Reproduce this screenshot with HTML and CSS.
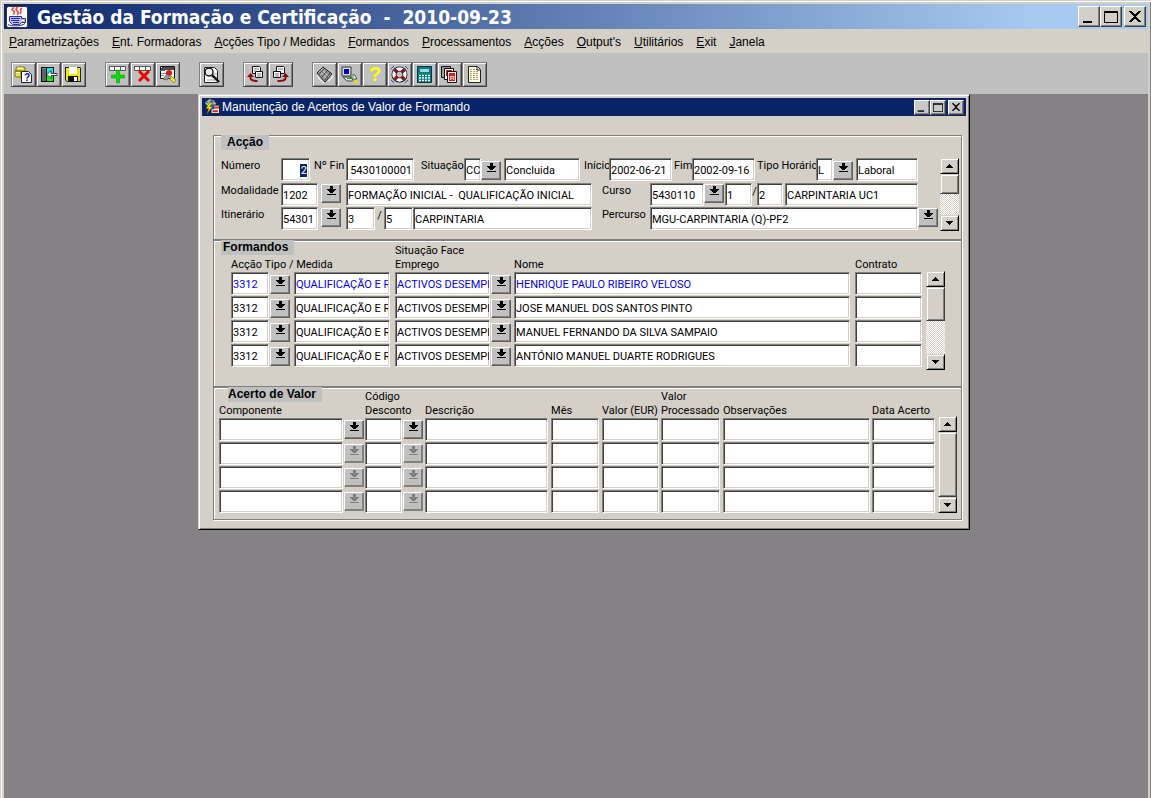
FILE: index.html
```html
<!DOCTYPE html>
<html lang="pt">
<head>
<meta charset="utf-8">
<title>Gestão da Formação e Certificação</title>
<link rel="stylesheet" href="styles.css">
</head>
<body>
<svg class="defs" aria-hidden="true">
  <symbol id="lov" viewBox="0 0 9 9"><path d="M3 0h3v3h3v1h-1v1h-1v1h-1v1h-3v-1h-1v-1h-1v-1h-1v-1h3zM0 8h9v1h-9z"/></symbol>
  <symbol id="up" viewBox="0 0 7 4"><path d="M3 0h1v1h1v1h1v1h1v1h-7v-1h1v-1h1v-1h1z"/></symbol>
  <symbol id="down" viewBox="0 0 7 4"><path d="M0 0h7v1h-1v1h-1v1h-1v1h-1v-1h-1v-1h-1v-1h-1z"/></symbol>
  <symbol id="min" viewBox="0 0 14 12"><path d="M1 10h9v2h-9z"/></symbol>
  <symbol id="max" viewBox="0 0 14 12"><path d="M0 0h14v12h-14zM1 2v9h12v-9z" fill-rule="evenodd"/></symbol>
  <symbol id="close" viewBox="0 0 12 11"><path d="M0 0h3v1h1v1h1v1h2v-1h1v-1h1v-1h3v1h-1v1h-1v1h-1v1h-1v1h-1v1h1v1h1v1h1v1h1v1h1v1h-3v-1h-1v-1h-1v-1h-2v1h-1v1h-1v1h-3v-1h1v-1h1v-1h1v-1h1v-1h1v-1h-1v-1h-1v-1h-1v-1h-1v-1h-1z"/></symbol>
</svg>
<div class="app">
  <header class="titlebar">
    <svg class="logo" viewBox="0 0 22 22" aria-hidden="true"><rect x=".5" y=".5" width="21" height="21" rx="2" fill="#fff" stroke="#334"/><path d="M8 1.500c-6 3 4 3-1 7M12 1c-6 4 4 4-1 8M16 2c-4 3 1 3-2 6" fill="none" stroke="#f04848" stroke-width="1.600"/><path d="M3.500 10.500h12v2h4v4h-4l-2 2h-7l-3-3z" fill="#b8bce8" stroke="#303090"/><path d="M15 14.500h3" stroke="#fff"/><path d="M5 12.500h9M5 14.500h8M7 16.500h6M2 18.500c3 2 13 2 17-1" fill="none" stroke="#282898"/></svg>
    <h1>Gestão da Formação e Certificação&nbsp; -&nbsp; 2010-09-23</h1>
    <div class="winbtns">
      <button aria-label="Minimizar"><svg class="g14"><use href="#min"/></svg></button>
      <button aria-label="Maximizar"><svg class="g14"><use href="#max"/></svg></button>
      <button aria-label="Fechar" class="x"><svg class="g12"><use href="#close"/></svg></button>
    </div>
  </header>
  <nav class="menu" aria-label="Menu">
    <button><u>P</u>arametrizações</button><button><u>E</u>nt. Formadoras</button><button><u>A</u>cções Tipo / Medidas</button><button><u>F</u>ormandos</button><button><u>P</u>rocessamentos</button><button><u>A</u>cções</button><button><u>O</u>utput's</button><button><u>U</u>tilitários</button><button><u>E</u>xit</button><button><u>J</u>anela</button>
  </nav>
  <div class="toolbar" role="toolbar" aria-label="Ferramentas">
    <div class="tools">
      <button aria-label="Consulta"><svg viewBox="0 0 17 17"><path d="M2 1h7l1 1v3h-9v-3zM0 5h6v6h-5l-1-1z" fill="#e8e040" stroke="#806800"/><path d="M2 2h6M1 6.500h4" stroke="#fff"/><path d="M6.500 5.500h7l3 3v8h-10z" fill="#fff" stroke="#222"/><text x="9" y="15" class="qs">?</text></svg></button>
      <button aria-label="Sair"><svg viewBox="0 0 17 17"><path d="M1 1h13v15h-13z" fill="#111"/><path d="M2 2h4v13h-4z" fill="#808080"/><path d="M3 3v12M5 3v12" stroke="#444"/><path d="M7 2h6v7h-6z" fill="#00f0f0"/><path d="M7 9h6v6h-6z" fill="#00ff00"/><path d="M7 8.500l4-4v3h6v2h-6v3z" fill="#fff" stroke="#222" stroke-width=".8"/></svg></button>
      <button aria-label="Gravar"><svg viewBox="0 0 17 17"><path d="M0 1h15l1 1v14h-14l-2-2z" fill="#222"/><path d="M1 2h14v13h-13l-1-1z" fill="#f0e800"/><path d="M4 1h8v7h-8z" fill="#fff"/><path d="M3 10h10v6h-10z" fill="#111"/><path d="M9 11h3v4h-3z" fill="#fff"/></svg></button>
    </div>
    <div class="tools">
      <button aria-label="Inserir"><svg viewBox="0 0 17 17"><path d="M.5.500h16v4h-16zM5.500 1v3M11.500 1v3" fill="#fff" stroke="#555"/><path d="M7.500 4h3v5h5v3h-5v5h-3v-5h-5v-3h5z" fill="#00e000" stroke="#00a000" stroke-width=".6"/></svg></button>
      <button aria-label="Eliminar"><svg viewBox="0 0 17 17"><path d="M.5.500h16v4h-16zM5.500 1v3M11.500 1v3" fill="#fff" stroke="#555"/><path d="M5 5l10 10M15 5l-10 10" stroke="#f00000" stroke-width="3"/></svg></button>
      <button aria-label="Limpar"><svg viewBox="0 0 17 17"><path d="M1.500.500h14v12h-14z" fill="#fff" stroke="#111"/><path d="M1 3h14M3 1h12" stroke="#111" stroke-width="1.500"/><path d="M2 7.500h5M2 9.500h3" stroke="#888"/><path d="M1 4.500h5" stroke="#008080"/><circle cx="10" cy="7" r="3" fill="#f01010"/><path d="M4 13l4-5 3 2-3 4z" fill="#999" stroke="#333" stroke-width=".5"/><path d="M12 10l5 4-2 3-4-4z" fill="#ffe800" stroke="#886"/></svg></button>
    </div>
    <div class="tools">
      <button aria-label="Procurar"><svg viewBox="0 0 17 17"><path d="M1.500 1.500h10l3 3v12h-13z" fill="#fff" stroke="#222"/><path d="M9 8h5M8 11h6M4 14h9" stroke="#999"/><circle cx="6" cy="6" r="4" fill="#eee" stroke="#111" stroke-width="1.400"/><path d="M9 9l7 7" stroke="#111" stroke-width="2.400"/></svg></button>
    </div>
    <div class="tools">
      <button aria-label="Anterior"><svg viewBox="0 0 17 17"><path d="M5.500.500h7l1 1v6h-8z" fill="#fff" stroke="#111"/><path d="M8.500 5.500h7v6h-7z" fill="#fff" stroke="#111"/><path d="M7 3h5M7 5h2M10 8h4M10 10h4" stroke="#777"/><path d="M3.500 10v2c0 3 4 3 7 3" fill="none" stroke="#900808" stroke-width="2"/><path d="M0 11l3.500-4 3.500 4z" fill="#900808"/></svg></button>
      <button aria-label="Seguinte"><svg viewBox="0 0 17 17"><path d="M4.500.500h7l1 1v6h-8z" fill="#fff" stroke="#111"/><path d="M1.500 5.500h7v6h-7z" fill="#fff" stroke="#111"/><path d="M6 3h5M3 8h4M3 10h4" stroke="#777"/><path d="M13.500 10v2c0 3-4 3-8 3" fill="none" stroke="#900808" stroke-width="2"/><path d="M10 11l3.500-4 3.500 4z" fill="#900808"/></svg></button>
    </div>
    <div class="tools">
      <button aria-label="Imprimir"><svg viewBox="0 0 17 17"><path d="M1 7l6-6 9 7-7 8z" fill="#999" stroke="#222"/><path d="M5 3l8 8M3 5l8 8" stroke="#ddd" stroke-width=".8"/><path d="M8 3l-5 5M11 5l-5 6M14 7l-5 7" stroke="#222" stroke-width=".8"/><path d="M1 9l3 5 4 3M12 15l4-3v-3" stroke="#fff" fill="none"/></svg></button>
      <button aria-label="Sistema"><svg viewBox="0 0 17 17"><path d="M1 1h9v9h-9z" fill="#ddd" stroke="#333"/><path d="M3 3h5v5h-5z" fill="#0000d0"/><path d="M2 11h7l4 4h-7z" fill="#ddd" stroke="#444"/><path d="M9 9h5l2 4h-5z" fill="#eee" stroke="#555"/><path d="M10 11h3M6 12.500h4" stroke="#0b0"/><path d="M12 15.500h5" stroke="#e8e000" stroke-width="2"/></svg></button>
      <button aria-label="Ajuda"><svg viewBox="0 0 17 17"><text x="3" y="15" class="qb">?</text></svg></button>
      <button aria-label="Suporte"><svg viewBox="0 0 17 17"><circle cx="8.500" cy="8.500" r="5.500" fill="none" stroke="#112" stroke-width="5"/><circle cx="8.500" cy="8.500" r="5.500" fill="none" stroke="#fff" stroke-width="3.400"/><path d="M3.500 3.500l3 3M13.500 3.500l-3 3M3.500 13.500l3-3M13.500 13.500l-3-3" stroke="#801818" stroke-width="3.400"/><path d="M0 3l3-3M14 0l3 3M0 14l3 3M17 14l-3 3" stroke="#4050b0"/></svg></button>
      <button aria-label="Calculadora"><svg viewBox="0 0 17 17"><path d="M1.500.500h14v16h-14z" fill="#008080" stroke="#034"/><path d="M4 3h9v3h-9z" fill="#a0d8d8"/><path d="M3 9.500h11M3 12h11M3 14.500h11" stroke="#fff" stroke-width="1.600" stroke-dasharray="2 1"/></svg></button>
      <button aria-label="Ficheiros"><svg viewBox="0 0 17 17"><path d="M.5.500h9v11h-9z" fill="#999" stroke="#111"/><path d="M3.500 2.500h9v11h-9z" fill="#fff" stroke="#111"/><path d="M5 4h6v6h-6z" fill="#e01818"/><path d="M6.500 5.500h9v11h-9z" fill="#fff" stroke="#111"/><path d="M8 7h6v8h-6z" fill="#e01818"/><text x="9" y="14" class="fi">FI</text></svg></button>
      <button aria-label="Relatório"><svg viewBox="0 0 17 17"><path d="M2.500.500h9l3 3v13h-12z" fill="#fffde0" stroke="#222"/><path d="M4 3.500h7M4 5.500h9M4 7.500h9M4 9.500h9M4 11.500h9M4 13.500h9" stroke="#a8a070" stroke-dasharray="2 1"/><path d="M11 1v3h3" fill="none" stroke="#222"/></svg></button>
    </div>
  </div>
  <main class="desktop">
    <div class="window">
      <header class="wtitle">
        <svg class="wicon" viewBox="0 0 17 17" aria-hidden="true"><path d="M3 2l3-2 4 1 3 4-2 4-8-2-2-3z" fill="#a8b8a0"/><path d="M1 2l3 2M8 0l1 3M6 3h4" stroke="#203080"/><path d="M7.500 6.500h9v9h-9z" fill="#fff" stroke="#111"/><path d="M11 8h5v2h-5zM9 12h6v2h-6z" fill="#e02020"/><path d="M8 7h3v4h-3z" fill="#2040c0"/><path d="M6 4l-4 6h3l-2 6 6-8h-3l3-4z" fill="#ffe800" stroke="#443" stroke-width=".5"/></svg>
        <h2>Manutenção de Acertos de Valor de Formando</h2>
        <div class="winbtns small">
          <button aria-label="Minimizar janela"><svg class="g9"><use href="#min"/></svg></button>
          <button aria-label="Maximizar janela"><svg class="g9"><use href="#max"/></svg></button>
          <button aria-label="Fechar janela" class="x"><svg class="g8"><use href="#close"/></svg></button>
        </div>
      </header>
      <form class="content">
        <section class="group accao">
          <h3>Acção</h3>
          <div class="withbar">
            <div class="rows">
              <div class="row r1">
                <label for="num">Número</label><input id="num" class="marked" value="2">
                <label for="fin" class="p4">Nº Fin</label><input id="fin" class="right" value="5430100001">
                <label for="sit" class="p7">Situação</label><input id="sit" class="open" value="CC"><button type="button" class="lov" aria-label="Lista de situações"><svg><use href="#lov"/></svg></button><input aria-label="Descrição da situação" value="Concluida">
                <label for="ini" class="p4">Início</label><input id="ini" value="2002-06-21">
                <label for="fim" class="p2">Fim</label><input id="fim" value="2002-09-16">
                <label for="hor" class="p2">Tipo Horário</label><input id="hor" value="L"><button type="button" class="lov" aria-label="Lista de horários"><svg><use href="#lov"/></svg></button><input aria-label="Descrição do horário" value="Laboral">
              </div>
              <div class="row r2">
                <label for="mod">Modalidade</label><input id="mod" value="1202"><button type="button" class="lov mid" aria-label="Lista de modalidades"><svg><use href="#lov"/></svg></button><input aria-label="Descrição da modalidade" value="FORMAÇÃO INICIAL -  QUALIFICAÇÃO INICIAL">
                <label for="cur" class="p10">Curso</label><input id="cur" value="5430110"><button type="button" class="lov" aria-label="Lista de cursos"><svg><use href="#lov"/></svg></button><input aria-label="Versão" value="1"><span class="slash">/</span><input aria-label="Subversão" value="2"><i></i><input aria-label="Nome do curso" value="CARPINTARIA UC1">
              </div>
              <div class="row r3">
                <label for="iti">Itinerário</label><input id="iti" value="54301"><button type="button" class="lov mid" aria-label="Lista de itinerários"><svg><use href="#lov"/></svg></button><input aria-label="Versão do itinerário" value="3"><span class="slash">/</span><input aria-label="Subversão do itinerário" value="5"><input aria-label="Nome do itinerário" value="CARPINTARIA">
                <label for="per" class="p10">Percurso</label><input id="per" value="MGU-CARPINTARIA (Q)-PF2"><button type="button" class="lov" aria-label="Lista de percursos"><svg><use href="#lov"/></svg></button>
              </div>
            </div>
            <div class="bar"><button type="button" aria-label="Subir"><svg><use href="#up"/></svg></button><div class="thumb t20"></div><button type="button" class="end" aria-label="Descer"><svg><use href="#down"/></svg></button></div>
          </div>
        </section>

        <section class="group formandos">
          <h3>Formandos</h3>
          <div class="withbar">
            <table>
              <colgroup><col class="c39"><col class="c24"><col class="c101"><col class="c96"><col class="c23"><col><col class="c71"></colgroup>
              <thead><tr><th colspan="3">Acção Tipo / Medida</th><th colspan="2">Situação Face<br>Emprego</th><th>Nome</th><th>Contrato</th></tr></thead>
              <tbody>
                <tr class="current"><td class="g1"><input aria-label="Acção tipo" value="3312"></td><td><button type="button" class="lov" aria-label="Lista de acções"><svg><use href="#lov"/></svg></button></td><td class="g5"><input aria-label="Medida" value="QUALIFICAÇÃO E RECONVERSÃO"></td><td class="g1"><input class="open" aria-label="Situação face ao emprego" value="ACTIVOS DESEMPREGADOS"></td><td><button type="button" class="lov" aria-label="Lista de situações"><svg><use href="#lov"/></svg></button></td><td class="g5"><input aria-label="Nome" value="HENRIQUE PAULO RIBEIRO VELOSO"></td><td class="g4"><input aria-label="Contrato"></td></tr>
                <tr><td class="g1"><input aria-label="Acção tipo" value="3312"></td><td><button type="button" class="lov" aria-label="Lista de acções"><svg><use href="#lov"/></svg></button></td><td class="g5"><input aria-label="Medida" value="QUALIFICAÇÃO E RECONVERSÃO"></td><td class="g1"><input class="open" aria-label="Situação face ao emprego" value="ACTIVOS DESEMPREGADOS"></td><td><button type="button" class="lov" aria-label="Lista de situações"><svg><use href="#lov"/></svg></button></td><td class="g5"><input aria-label="Nome" value="JOSE MANUEL DOS SANTOS PINTO"></td><td class="g4"><input aria-label="Contrato"></td></tr>
                <tr><td class="g1"><input aria-label="Acção tipo" value="3312"></td><td><button type="button" class="lov" aria-label="Lista de acções"><svg><use href="#lov"/></svg></button></td><td class="g5"><input aria-label="Medida" value="QUALIFICAÇÃO E RECONVERSÃO"></td><td class="g1"><input class="open" aria-label="Situação face ao emprego" value="ACTIVOS DESEMPREGADOS"></td><td><button type="button" class="lov" aria-label="Lista de situações"><svg><use href="#lov"/></svg></button></td><td class="g5"><input aria-label="Nome" value="MANUEL FERNANDO DA SILVA SAMPAIO"></td><td class="g4"><input aria-label="Contrato"></td></tr>
                <tr><td class="g1"><input aria-label="Acção tipo" value="3312"></td><td><button type="button" class="lov" aria-label="Lista de acções"><svg><use href="#lov"/></svg></button></td><td class="g5"><input aria-label="Medida" value="QUALIFICAÇÃO E RECONVERSÃO"></td><td class="g1"><input class="open" aria-label="Situação face ao emprego" value="ACTIVOS DESEMPREGADOS"></td><td><button type="button" class="lov" aria-label="Lista de situações"><svg><use href="#lov"/></svg></button></td><td class="g5"><input aria-label="Nome" value="ANTÓNIO MANUEL DUARTE RODRIGUES"></td><td class="g4"><input aria-label="Contrato"></td></tr>
              </tbody>
            </table>
            <div class="bar"><button type="button" aria-label="Subir"><svg><use href="#up"/></svg></button><div class="thumb t34"></div><button type="button" class="end" aria-label="Descer"><svg><use href="#down"/></svg></button></div>
          </div>
        </section>

        <section class="group acerto">
          <h3>Acerto de Valor</h3>
          <div class="withbar">
            <table>
              <colgroup><col class="c125"><col class="c21"><col class="c38"><col class="c22"><col class="c126"><col class="c51"><col class="c59"><col class="c62"><col><col class="c66"></colgroup>
              <thead><tr><th colspan="2">Componente</th><th colspan="2">Código<br>Desconto</th><th>Descrição</th><th>Mês</th><th>Valor (EUR)</th><th>Valor<br>Processado</th><th>Observações</th><th>Data Acerto</th></tr></thead>
              <tbody>
                <tr><td class="g1"><input aria-label="Componente"></td><td><button type="button" class="lov" aria-label="Lista de componentes"><svg><use href="#lov"/></svg></button></td><td class="g1"><input aria-label="Código desconto"></td><td><button type="button" class="lov" aria-label="Lista de descontos"><svg><use href="#lov"/></svg></button></td><td class="g3"><input aria-label="Descrição"></td><td class="g3"><input aria-label="Mês"></td><td class="g2"><input aria-label="Valor (EUR)"></td><td class="g3"><input aria-label="Valor processado"></td><td class="g2"><input aria-label="Observações"></td><td class="g3"><input aria-label="Data acerto"></td></tr>
                <tr><td class="g1"><input aria-label="Componente"></td><td><button type="button" class="lov" disabled aria-label="Lista de componentes"><svg><use href="#lov"/></svg></button></td><td class="g1"><input aria-label="Código desconto"></td><td><button type="button" class="lov" disabled aria-label="Lista de descontos"><svg><use href="#lov"/></svg></button></td><td class="g3"><input aria-label="Descrição"></td><td class="g3"><input aria-label="Mês"></td><td class="g2"><input aria-label="Valor (EUR)"></td><td class="g3"><input aria-label="Valor processado"></td><td class="g2"><input aria-label="Observações"></td><td class="g3"><input aria-label="Data acerto"></td></tr>
                <tr><td class="g1"><input aria-label="Componente"></td><td><button type="button" class="lov" disabled aria-label="Lista de componentes"><svg><use href="#lov"/></svg></button></td><td class="g1"><input aria-label="Código desconto"></td><td><button type="button" class="lov" disabled aria-label="Lista de descontos"><svg><use href="#lov"/></svg></button></td><td class="g3"><input aria-label="Descrição"></td><td class="g3"><input aria-label="Mês"></td><td class="g2"><input aria-label="Valor (EUR)"></td><td class="g3"><input aria-label="Valor processado"></td><td class="g2"><input aria-label="Observações"></td><td class="g3"><input aria-label="Data acerto"></td></tr>
                <tr><td class="g1"><input aria-label="Componente"></td><td><button type="button" class="lov" disabled aria-label="Lista de componentes"><svg><use href="#lov"/></svg></button></td><td class="g1"><input aria-label="Código desconto"></td><td><button type="button" class="lov" disabled aria-label="Lista de descontos"><svg><use href="#lov"/></svg></button></td><td class="g3"><input aria-label="Descrição"></td><td class="g3"><input aria-label="Mês"></td><td class="g2"><input aria-label="Valor (EUR)"></td><td class="g3"><input aria-label="Valor processado"></td><td class="g2"><input aria-label="Observações"></td><td class="g3"><input aria-label="Data acerto"></td></tr>
              </tbody>
            </table>
            <div class="bar"><button type="button" aria-label="Subir"><svg><use href="#up"/></svg></button><div class="thumb full"></div><button type="button" class="end" aria-label="Descer"><svg><use href="#down"/></svg></button></div>
          </div>
        </section>
      </form>
    </div>
  </main>
</div>
</body>
</html>
```
FILE: styles.css
```css
* { box-sizing: border-box; }
body { margin: 0; font-family: "Liberation Sans", Arial, sans-serif; font-size: 11px; line-height: 14px; color: #000; }
h1, h2, h3 { margin: 0; }
button, input { font: inherit; color: inherit; margin: 0; border-radius: 0; }
button { padding: 0; }
.defs { display: none; }

.app { display: flex; flex-direction: column; min-height: 100vh; padding: 4px 3px 0 4px; background: #d4d0c8; box-shadow: inset 1px 1px 0 #d4d0c8, inset 2px 2px 0 #fff, inset -1px 0 0 #808080; }
.titlebar { display: flex; align-items: center; height: 25px; padding: 0 2px; background: linear-gradient(90deg, #0a246a, #a6caf0 90%); }
.logo { width: 22px; height: 22px; margin-right: 9px; }
.titlebar h1 { flex: 1; font: bold 19px/24px "DejaVu Sans Condensed", "Noto Sans", sans-serif; color: #fff; white-space: nowrap; }
.winbtns { display: flex; }
.winbtns button { display: flex; align-items: center; justify-content: center; width: 22px; height: 21px; background: #d4d0c8; border: 1px solid; border-color: #fff #404040 #404040 #fff; box-shadow: inset -1px -1px 0 #808080; }
.winbtns .x { margin-left: 2px; }
.winbtns.small button { width: 16px; height: 15px; background: #c8c8c8; }
.g14 { width: 14px; height: 12px; }
.g12 { width: 12px; height: 11px; }
.g9 { width: 10px; height: 9px; }
.g8 { width: 8px; height: 8px; }

.menu { display: flex; gap: 13px; align-items: center; height: 24px; padding: 2px 5px 0; font-size: 12px; }
.menu button { border: 0; background: none; white-space: nowrap; }

.toolbar { display: flex; gap: 19px; align-items: center; height: 41px; padding: 2px 7px 0; background: #c0c0c0; }
.tools { display: flex; }
.tools button { display: flex; align-items: center; justify-content: center; width: 25px; height: 25px; background: #c0c0c0; border: 1px solid; border-color: #808080 #404040 #404040 #808080; box-shadow: inset 1px 1px 0 #fff, inset -1px -1px 0 #808080; }
.tools svg { width: 17px; height: 17px; overflow: visible; }
.qs { font: bold 10px "Liberation Sans", sans-serif; fill: #0000b0; }
.qb { font: bold 20px "Liberation Sans", sans-serif; fill: #ffff00; }
.fi { font: bold 5px "Liberation Sans", sans-serif; fill: #fff; }

.desktop { flex: 1; padding: 0 0 20px 194px; background: #848284; }
.window { max-width: 772px; border: 1px solid; border-color: #d4d0c8 #000 #000 #d4d0c8; padding: 3px; background: #d4d0c8; box-shadow: inset 1px 1px 0 #fff, inset -1px -1px 0 #808080; }
.wtitle { display: flex; align-items: center; height: 18px; padding: 0 2px; background: #0a246a; }
.wicon { width: 16px; height: 16px; margin-right: 2px; }
.wtitle h2 { flex: 1; font-size: 12px; font-weight: normal; color: #fff; white-space: nowrap; }
.content { padding: 19px 4px 6px 11px; font-family: Roboto, "Liberation Sans", sans-serif; }

.group { border: 1px solid #808080; background: #d4d0c8; box-shadow: inset 1px 1px 0 #fff, 1px 1px 0 #fff; }
.group h3 { width: max-content; margin-top: -1px; margin-left: 7px; background: #c0c0c0; font: bold 12px/15px "Liberation Sans", Arial, sans-serif; }
.accao h3 { padding: 0 6px; }
.formandos h3 { padding: 0 6px 0 2px; }
.acerto h3 { margin-left: 14px; padding-right: 6px; }
.withbar { display: flex; align-items: flex-start; }

label { padding-top: 1px; }
input { display: block; width: 100%; min-width: 0; height: 23px; padding: 2px 1px 0; background: #fff; border: 1px solid; border-color: #808080 #fff #fff #808080; box-shadow: inset 1px 1px 0 #404040, inset -1px -1px 0 #d4d0c8; outline: 0; }
input.right { text-align: right; }
input.open { border-right-color: #fff; padding-right: 0; }
input.marked { padding-right: 2px; text-align: right; color: #fff; background: linear-gradient(#0a246a, #0a246a) no-repeat right 2px bottom 3px / 7px 13px #fff; }

.lov { display: flex; justify-content: center; width: 20px; height: 19px; margin: 3px 0 0 0; padding-top: 1px; background: #c0c0c0; border: 1px solid; border-color: #fff #606060 #606060 #fff; box-shadow: inset -1px -1px 0 #808080; color: #000; }
.lov svg { width: 9px; height: 9px; fill: currentColor; }
.lov:disabled { color: #808080; border-color: #fff #808080 #808080 #fff; }

.accao .withbar { padding: 8px 2px 8px 7px; gap: 2px; }
.accao .bar { align-self: stretch; }
.rows { flex: 1; min-width: 0; }
.row { display: grid; height: 24px; white-space: nowrap; }
.row.r1 { height: 25px; }
.row .lov.mid { margin-left: 3px; }
.r2 .lov, .r3 .lov { margin-top: 1px; }
.row.r1 { grid-template-columns: 60px 29px 36px 68px 50px 17px 23px minmax(0, 1fr) 29px 63px 20px 63px 61px 17px 23px 62px 20px; }
.row.r2 { grid-template-columns: 60px 37px 28px minmax(0, 1fr) 58px 54px 21px 27px 5px 26px 2px 133px 20px; }
.row.r3 { grid-template-columns: 60px 37px 28px 29px 9px 29px minmax(0, 1fr) 58px 268px 20px; }
.p2 { padding-left: 2px; }
.p4 { padding-left: 4px; }
.p7 { padding-left: 7px; }
.p10 { padding-left: 10px; }
.slash { padding-top: 2px; text-align: center; }

.bar { display: flex; flex-direction: column; width: 19px; background: repeating-conic-gradient(#fff 0 25%, #d4d0c8 0 50%) 0 0 / 2px 2px; }
.bar button { display: flex; align-items: center; justify-content: center; height: 16px; background: #d4d0c8; border: 1px solid; border-color: #d4d0c8 #000 #000 #d4d0c8; box-shadow: inset 1px 1px 0 #fff, inset -1px -1px 0 #808080; }
.bar svg { width: 7px; height: 4px; }
.bar .end { margin-top: auto; }
.thumb { background: #d4d0c8; border: 1px solid; border-color: #d4d0c8 #404040 #404040 #d4d0c8; box-shadow: inset 1px 1px 0 #fff, inset -1px -1px 0 #808080; }
.t20 { height: 20px; }
.t34 { height: 34px; }
.full { flex: 1; }

table { flex: 1; min-width: 0; width: 100%; table-layout: fixed; border-collapse: collapse; }
th { height: 28px; padding: 0; font-weight: normal; text-align: left; vertical-align: bottom; white-space: nowrap; }
td { height: 24px; padding: 0; vertical-align: top; }
.current { color: #0000ff; }
.current .lov { color: #000; }
.g1 { padding-right: 1px; }
.g2 { padding-right: 2px; }
.g3 { padding-right: 3px; }
.g4 { padding-right: 4px; }
.g5 { padding-right: 5px; }
.c21 { width: 21px; }
.c22 { width: 22px; }
.c23 { width: 23px; }
.c24 { width: 24px; }
.c38 { width: 38px; }
.c39 { width: 39px; }
.c51 { width: 51px; }
.c59 { width: 59px; }
.c62 { width: 62px; }
.c66 { width: 66px; }
.c71 { width: 71px; }
.c96 { width: 96px; }
.c101 { width: 101px; }
.c125 { width: 125px; }
.c126 { width: 126px; }
.formandos .withbar { margin-top: -11px; padding: 0 16px 16px 17px; }
.formandos .bar { margin-top: 27px; height: 99px; }
.acerto .withbar { margin-top: -12px; padding: 0 4px 5px 5px; }
.acerto .bar { margin-top: 26px; height: 97px; }
.acerto .lov { margin-top: 2px; }
```
